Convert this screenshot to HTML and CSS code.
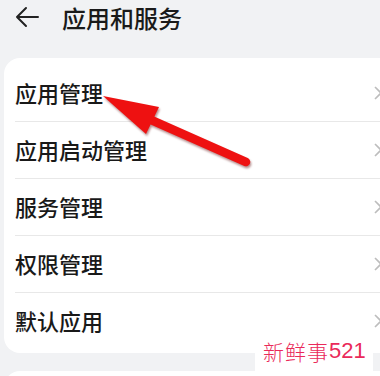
FILE: index.html
```html
<!DOCTYPE html>
<html lang="zh">
<head>
<meta charset="utf-8">
<link rel="stylesheet" href="styles.css">
</head>
<body>
<div class="page">
  <header class="header">
    <svg class="back" width="24" height="22" viewBox="0 0 24 22"><path d="M23 11H2M11 2L2 11L11 20" fill="none" stroke="#222" stroke-width="2" stroke-linecap="round" stroke-linejoin="round"/></svg>
    <h1 class="title">应用和服务</h1>
  </header>
  <div class="card">
    <div class="row"><span class="label">应用管理</span><svg class="chev" width="10" height="16" viewBox="0 0 10 16"><path d="M2 2L8 8L2 14" fill="none" stroke="#bdbdbd" stroke-width="1.6"/></svg></div>
    <div class="row"><span class="label">应用启动管理</span><svg class="chev" width="10" height="16" viewBox="0 0 10 16"><path d="M2 2L8 8L2 14" fill="none" stroke="#bdbdbd" stroke-width="1.6"/></svg></div>
    <div class="row"><span class="label">服务管理</span><svg class="chev" width="10" height="16" viewBox="0 0 10 16"><path d="M2 2L8 8L2 14" fill="none" stroke="#bdbdbd" stroke-width="1.6"/></svg></div>
    <div class="row"><span class="label">权限管理</span><svg class="chev" width="10" height="16" viewBox="0 0 10 16"><path d="M2 2L8 8L2 14" fill="none" stroke="#bdbdbd" stroke-width="1.6"/></svg></div>
    <div class="row last"><span class="label">默认应用</span><svg class="chev" width="10" height="16" viewBox="0 0 10 16"><path d="M2 2L8 8L2 14" fill="none" stroke="#bdbdbd" stroke-width="1.6"/></svg></div>
  </div>
  <div class="card card2"></div>
  <div class="watermark"><span class="wm-cjk">新鲜事</span><span class="wm-num">521</span></div>
  <svg class="pointer" width="380" height="376" viewBox="0 0 380 376">
    <g class="arrow-shape">
      <line x1="140" y1="115" x2="246" y2="162" stroke="#ee1111" stroke-width="8.5" stroke-linecap="round"/>
      <polygon points="103,96 159,107 146,134" fill="#ee1111"/>
    </g>
  </svg>
</div>
</body>
</html>
```

FILE: styles.css
```css
* { box-sizing: border-box; }
html, body { margin: 0; padding: 0; }
body {
  background: #f1f2f4;
  font-family: "Noto Sans CJK SC", "Noto Sans", sans-serif;
  color: #1a1a1a;
  width: 380px;
  height: 376px;
  overflow: hidden;
}
.page {
  position: relative;
  width: 380px;
  height: 376px;
  overflow: hidden;
}
.header {
  height: 58px;
  display: flex;
  align-items: flex-start;
  padding: 0 0 0 15px;
  gap: 23px;
}
.back {
  margin-top: 6px;
  flex: none;
}
.title {
  margin: 0;
  font-size: 24px;
  line-height: 35px;
  font-weight: 500;
  color: #1a1a1a;
}
.card {
  margin-left: 4px;
  width: 400px;
  background: #fff;
  border-radius: 16px;
  padding: 7px 0 4px 0;
}
.row {
  height: 57px;
  display: flex;
  align-items: center;
  justify-content: space-between;
  margin-left: 11px;
  padding-right: 21px;
  border-bottom: 1px solid #e8e8e8;
}
.row.last { border-bottom: none; height: 56px; }
.label {
  font-size: 22px;
  font-weight: 500;
  color: #191919;
  line-height: 30px;
  padding-bottom: 3px;
}
.chev { flex: none; }
.card2 {
  margin-top: 18px;
  height: 40px;
  padding: 0;
}
.watermark {
  position: absolute;
  left: 255px;
  top: 330px;
  width: 118px;
  height: 46px;
  background: #fff;
  display: flex;
  align-items: center;
  padding: 0 0 4px 8px;
  color: #ea2a5a;
}
.wm-cjk {
  font-family: "Noto Sans CJK SC", serif;
  font-weight: 300;
  font-size: 21px;
  letter-spacing: 1px;
}
.wm-num {
  font-family: "Liberation Sans", sans-serif;
  font-size: 22px;
}
.pointer {
  position: absolute;
  left: 0;
  top: 0;
  pointer-events: none;
}
.arrow-shape {
  filter: drop-shadow(1px 2px 1px rgba(90, 0, 0, 0.45));
}
```
